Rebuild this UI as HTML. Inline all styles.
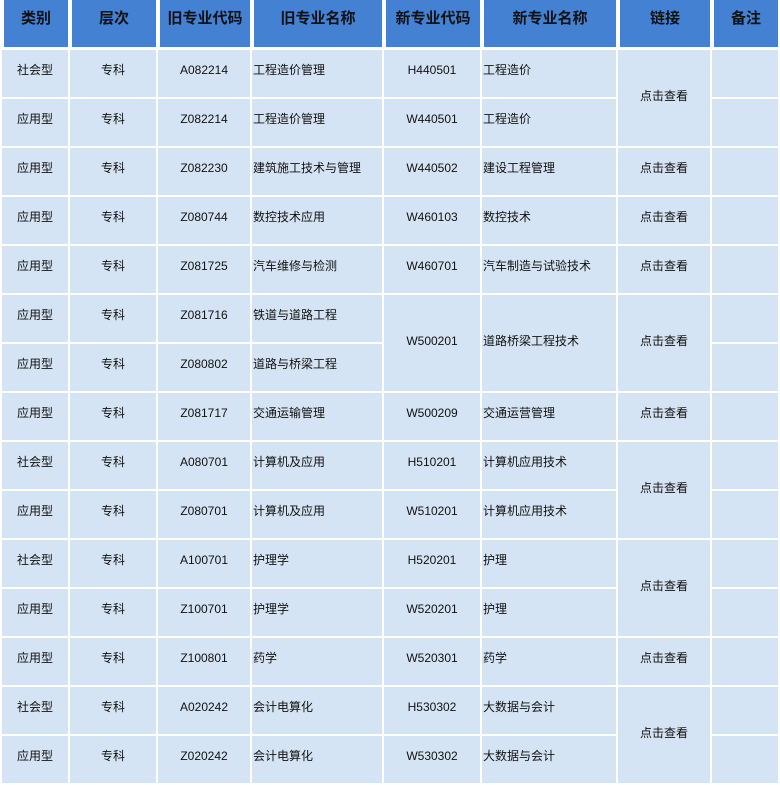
<!DOCTYPE html>
<html><head><meta charset="utf-8"><style>
body{margin:0;width:780px;height:742px;overflow:hidden;background:#fff;font-family:"Liberation Sans","Noto Sans CJK SC",sans-serif;}
.h{position:absolute;top:0;height:47px;background:#4581d2;color:#111;font-weight:bold;font-size:15px;text-align:center;line-height:18px;padding-top:10px;box-sizing:border-box;}
table{position:absolute;left:0;top:48px;border-collapse:separate;border-spacing:2px;table-layout:fixed;}
td{background:#d5e4f4;height:47px;padding:0;font-size:12px;color:#111;text-align:center;vertical-align:top;box-sizing:border-box;padding-top:12px;line-height:16px;white-space:nowrap;overflow:hidden;}
td.l{text-align:left;padding-left:1px;}
td.m{vertical-align:middle;padding-top:0;padding-bottom:4px;}
</style></head><body>
<div class="h" style="left:4px;width:64px">类别</div>
<div class="h" style="left:72px;width:84px">层次</div>
<div class="h" style="left:160px;width:90px">旧专业代码</div>
<div class="h" style="left:254px;width:128px">旧专业名称</div>
<div class="h" style="left:386px;width:94px">新专业代码</div>
<div class="h" style="left:484px;width:132px">新专业名称</div>
<div class="h" style="left:620px;width:90px">链接</div>
<div class="h" style="left:714px;width:64px">备注</div>
<table>
<colgroup><col style="width:66px"><col style="width:86px"><col style="width:92px"><col style="width:130px"><col style="width:96px"><col style="width:134px"><col style="width:92px"><col style="width:66px"></colgroup>
<tr><td>社会型</td><td>专科</td><td>A082214</td><td class="l">工程造价管理</td><td>H440501</td><td class="l">工程造价</td><td class="m" rowspan="2">点击查看</td><td></td></tr>
<tr><td>应用型</td><td>专科</td><td>Z082214</td><td class="l">工程造价管理</td><td>W440501</td><td class="l">工程造价</td><td></td></tr>
<tr><td>应用型</td><td>专科</td><td>Z082230</td><td class="l">建筑施工技术与管理</td><td>W440502</td><td class="l">建设工程管理</td><td>点击查看</td><td></td></tr>
<tr><td>应用型</td><td>专科</td><td>Z080744</td><td class="l">数控技术应用</td><td>W460103</td><td class="l">数控技术</td><td>点击查看</td><td></td></tr>
<tr><td>应用型</td><td>专科</td><td>Z081725</td><td class="l">汽车维修与检测</td><td>W460701</td><td class="l">汽车制造与试验技术</td><td>点击查看</td><td></td></tr>
<tr><td>应用型</td><td>专科</td><td>Z081716</td><td class="l">铁道与道路工程</td><td class="m" rowspan="2">W500201</td><td class="l m" rowspan="2">道路桥梁工程技术</td><td class="m" rowspan="2">点击查看</td><td></td></tr>
<tr><td>应用型</td><td>专科</td><td>Z080802</td><td class="l">道路与桥梁工程</td><td></td></tr>
<tr><td>应用型</td><td>专科</td><td>Z081717</td><td class="l">交通运输管理</td><td>W500209</td><td class="l">交通运营管理</td><td>点击查看</td><td></td></tr>
<tr><td>社会型</td><td>专科</td><td>A080701</td><td class="l">计算机及应用</td><td>H510201</td><td class="l">计算机应用技术</td><td class="m" rowspan="2">点击查看</td><td></td></tr>
<tr><td>应用型</td><td>专科</td><td>Z080701</td><td class="l">计算机及应用</td><td>W510201</td><td class="l">计算机应用技术</td><td></td></tr>
<tr><td>社会型</td><td>专科</td><td>A100701</td><td class="l">护理学</td><td>H520201</td><td class="l">护理</td><td class="m" rowspan="2">点击查看</td><td></td></tr>
<tr><td>应用型</td><td>专科</td><td>Z100701</td><td class="l">护理学</td><td>W520201</td><td class="l">护理</td><td></td></tr>
<tr><td>应用型</td><td>专科</td><td>Z100801</td><td class="l">药学</td><td>W520301</td><td class="l">药学</td><td>点击查看</td><td></td></tr>
<tr><td>社会型</td><td>专科</td><td>A020242</td><td class="l">会计电算化</td><td>H530302</td><td class="l">大数据与会计</td><td class="m" rowspan="2">点击查看</td><td></td></tr>
<tr><td>应用型</td><td>专科</td><td>Z020242</td><td class="l">会计电算化</td><td>W530302</td><td class="l">大数据与会计</td><td></td></tr>
</table>
</body></html>
